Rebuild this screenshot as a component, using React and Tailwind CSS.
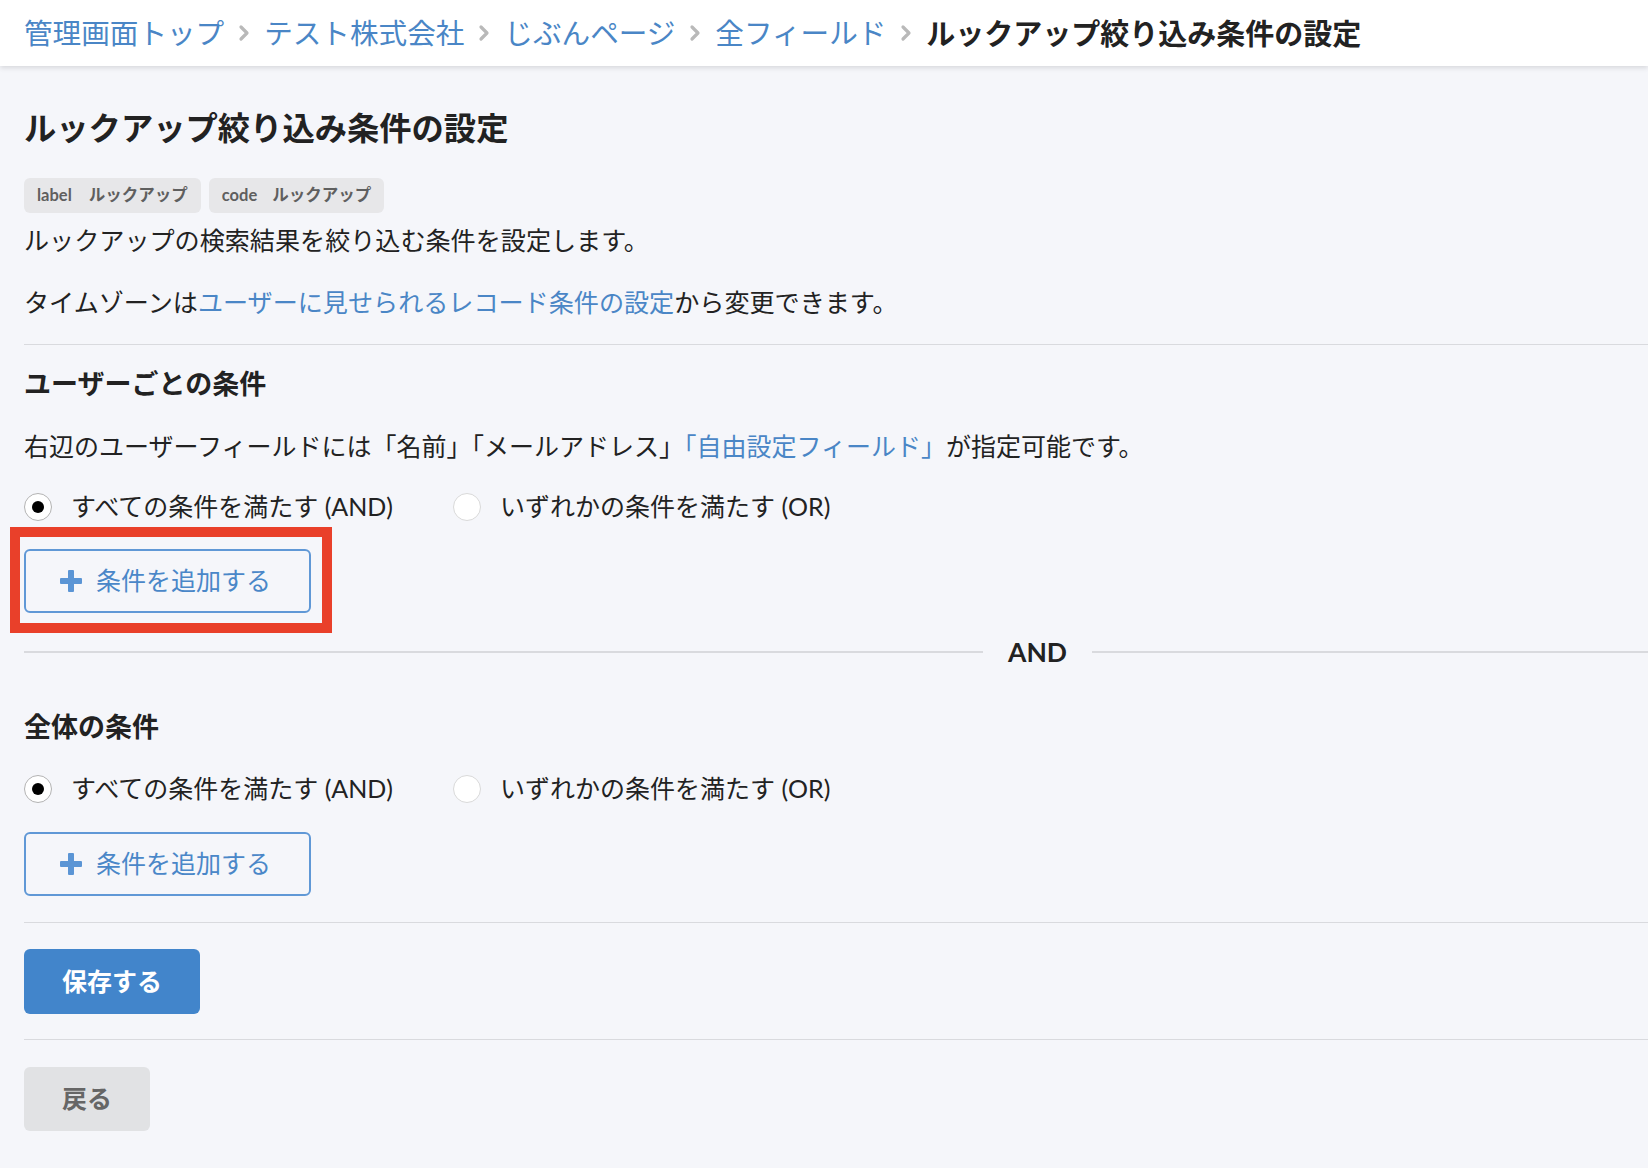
import React from "react"

const font = "font-['Lato','Noto_Sans_CJK_JP',sans-serif]"

function Chevron () {
    return (
        <svg width="12" height="18" viewBox="0 0 12 18" className="mx-[14px] shrink-0">
            <polyline points="3,3 9,9 3,15" fill="none" stroke="#b9b9b9" strokeWidth="3.2" strokeLinecap="round" strokeLinejoin="round" />
        </svg>
    )
}

function Breadcrumb () {
    const items = ["管理画面トップ", "テスト株式会社", "じぶんページ", "全フィールド"]
    return (
        <header className="relative z-10 h-[66px] bg-white shadow-[0_2px_5px_rgba(0,0,0,0.12)] pl-[24px] flex items-center">
            {items.map((item) => (
                <React.Fragment key={item}>
                    <a className="text-[28.6px] leading-none text-[#4a86c6] whitespace-nowrap">{item}</a>
                    <Chevron />
                </React.Fragment>
            ))}
            <span className="text-[29px] leading-none font-bold text-[#222] whitespace-nowrap">ルックアップ絞り込み条件の設定</span>
        </header>
    )
}

function Tag ({ name, value, gap }) {
    return (
        <span className="h-[35px] px-[13px] rounded-[6px] bg-[#e7e7e9] flex items-center text-[16.5px] font-bold text-[#5f5f5f]">
            <span>{name}</span>
            <span className={gap}>{value}</span>
        </span>
    )
}

function Radio ({ checked, label }) {
    return (
        <label className="flex items-center gap-[19px]">
            <span className={"w-[28px] h-[28px] rounded-full bg-white border flex items-center justify-center " + (checked ? "border-[#b3b3b3]" : "border-[#d9d9d9]")}>
                {checked && <span className="w-[12px] h-[12px] rounded-full bg-black"></span>}
            </span>
            <span>{label}</span>
        </label>
    )
}

function RadioRow ({ className }) {
    return (
        <div className={"h-[36px] flex items-center gap-[60px] text-[25px] text-[#222] " + className}>
            <Radio checked label="すべての条件を満たす (AND)" />
            <Radio label="いずれかの条件を満たす (OR)" />
        </div>
    )
}

function AddButton () {
    return (
        <button className="w-[287px] h-[64px] rounded-[6px] border-2 border-[#6098d6] flex items-center pl-[34px] gap-[14px] text-[25px] text-[#4a87c8]">
            <svg width="22" height="22" viewBox="0 0 22 22">
                <rect x="8" y="0" width="6" height="22" rx="1" fill="#5b95d5" />
                <rect x="0" y="8" width="22" height="6" rx="1" fill="#5b95d5" />
            </svg>
            <span>条件を追加する</span>
        </button>
    )
}

export default function App () {
    return (
        <div className={"min-h-screen bg-[#f5f6fa] text-[#222] " + font}>
            <Breadcrumb />
            <main className="pl-[24px] pt-[42px] pb-[37px] flex flex-col items-start">
                <h1 className="text-[32.3px] leading-[40px] font-bold">ルックアップ絞り込み条件の設定</h1>

                <div className="mt-[30px] flex gap-[8px]">
                    <Tag name="label" value="ルックアップ" gap="ml-[17px]" />
                    <Tag name="code" value="ルックアップ" gap="ml-[15px]" />
                </div>

                <p className="mt-[9px] text-[25.1px] leading-[36px]">ルックアップの検索結果を絞り込む条件を設定します。</p>
                <p className="mt-[26px] text-[25.1px] leading-[36px]">
                    タイムゾーンは<a className="text-[#4a86c6]">ユーザーに見せられるレコード条件の設定</a>から変更できます。
                </p>

                <hr className="mt-[24px] w-full border-0 h-px bg-[#d9dade]" />

                <h2 className="mt-[21px] text-[27px] leading-[36px] font-bold">ユーザーごとの条件</h2>
                <p className="mt-[26px] text-[25px] leading-[36px]">
                    右辺のユーザーフィールドには「名前」「メールアドレス」<a className="text-[#4a86c6]">「自由設定フィールド」</a>が指定可能です。
                </p>
                <RadioRow className="mt-[25px]" />

                <div className="relative mt-[24px]">
                    <AddButton />
                    <div className="absolute left-[-14px] top-[-22px] w-[322px] h-[106px] border-[10px] border-[#e9402a] pointer-events-none"></div>
                </div>

                <div className="mt-[21px] w-full h-[36px] flex items-center">
                    <div className="w-[959px] h-[2px] bg-[#d9dade]"></div>
                    <span className="px-[25px] text-[26.5px] font-bold text-[#222] leading-none">AND</span>
                    <div className="flex-1 h-[2px] bg-[#d9dade]"></div>
                </div>

                <h2 className="mt-[39px] text-[27px] leading-[36px] font-bold">全体の条件</h2>
                <RadioRow className="mt-[26px]" />
                <div className="mt-[25px]">
                    <AddButton />
                </div>

                <hr className="mt-[26px] w-full border-0 h-px bg-[#d9dade]" />

                <button className="mt-[26px] w-[176px] h-[65px] rounded-[6px] bg-[#4285cb] text-white text-[25px] font-bold">保存する</button>

                <hr className="mt-[25px] w-full border-0 h-px bg-[#d9dade]" />

                <button className="mt-[27px] w-[126px] h-[64px] rounded-[6px] bg-[#e1e2e4] text-[#666] text-[25px] font-bold">戻る</button>
            </main>
        </div>
    )
}
